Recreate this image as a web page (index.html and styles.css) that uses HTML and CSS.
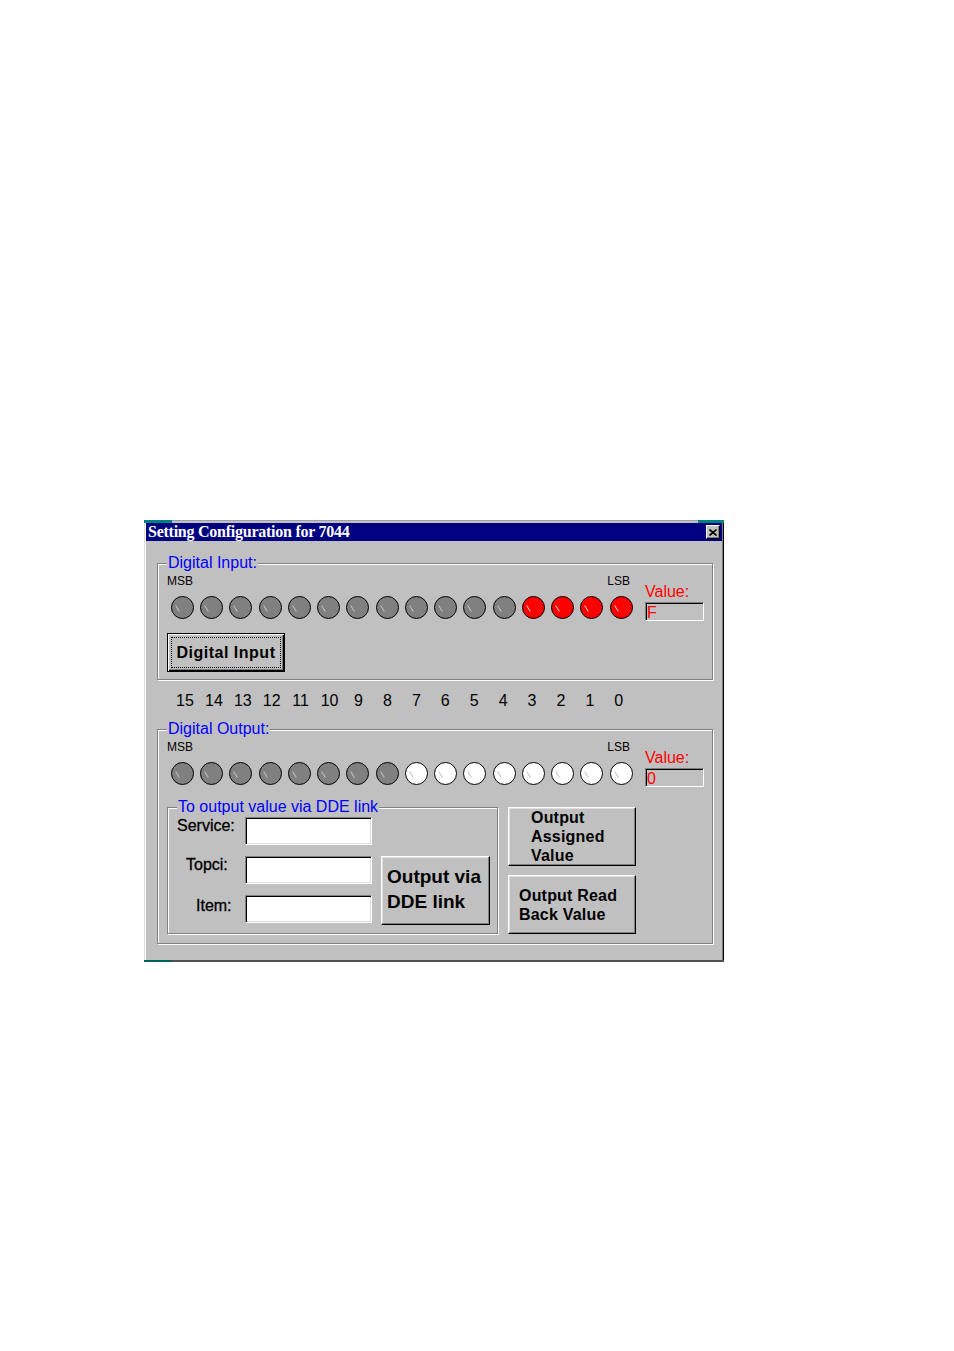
FILE: index.html
```html
<!DOCTYPE html>
<html>
<head>
<meta charset="utf-8">
<title>Setting Configuration for 7044</title>
<link rel="stylesheet" href="styles.css">
</head>
<body>
<div class="page">
  <div class="menu-cut"><span class="teal-l"></span><span class="frag"></span><span class="teal-r"></span></div>
  <div class="window">
    <div class="titlebar">
      <span class="title">Setting Configuration for 7044</span>
      <span class="close"><svg width="8" height="7" viewBox="0 0 8 7"><path d="M0.5 0.5 L7.5 6.5 M7.5 0.5 L0.5 6.5" stroke="#000" stroke-width="1.6" fill="none"/></svg></span>
    </div>
    <div class="client">
      <div class="group group-in">
        <span class="legend">Digital Input:</span>
        <div class="bits-row">
          <div class="ledcol">
            <div class="msb-lsb"><span>MSB</span><span>LSB</span></div>
            <div class="leds">
              <span class="led"></span><span class="led"></span><span class="led"></span><span class="led"></span>
              <span class="led"></span><span class="led"></span><span class="led"></span><span class="led"></span>
              <span class="led"></span><span class="led"></span><span class="led"></span><span class="led"></span>
              <span class="led red"></span><span class="led red"></span><span class="led red"></span><span class="led red"></span>
            </div>
          </div>
          <div class="valcol">
            <div class="val-label">Value:</div>
            <div class="val-box">F</div>
          </div>
        </div>
        <div class="btn btn-default"><span class="focus">Digital Input</span></div>
      </div>

      <div class="numbers">
        <span>15</span><span>14</span><span>13</span><span>12</span><span>11</span><span>10</span><span>9</span><span>8</span>
        <span>7</span><span>6</span><span>5</span><span>4</span><span>3</span><span>2</span><span>1</span><span>0</span>
      </div>

      <div class="group group-out">
        <span class="legend">Digital Output:</span>
        <div class="bits-row">
          <div class="ledcol">
            <div class="msb-lsb"><span>MSB</span><span>LSB</span></div>
            <div class="leds">
              <span class="led"></span><span class="led"></span><span class="led"></span><span class="led"></span>
              <span class="led"></span><span class="led"></span><span class="led"></span><span class="led"></span>
              <span class="led white"></span><span class="led white"></span><span class="led white"></span><span class="led white"></span>
              <span class="led white"></span><span class="led white"></span><span class="led white"></span><span class="led white"></span>
            </div>
          </div>
          <div class="valcol">
            <div class="val-label">Value:</div>
            <div class="val-box">0</div>
          </div>
        </div>
        <div class="dde-area">
          <div class="group subgroup">
            <span class="legend">To output value via DDE link</span>
            <div class="dde-grid">
              <span class="lbl lbl-service">Service:</span>
              <span class="input"></span>
              <span class="lbl lbl-topci">Topci:</span>
              <span class="input"></span>
              <span class="btn btn-dde">Output via<br>DDE link</span>
              <span class="lbl lbl-item">Item:</span>
              <span class="input"></span>
            </div>
          </div>
          <div class="side-btns">
            <div class="btn btn-side btn-assigned">Output<br>Assigned<br>Value</div>
            <div class="btn btn-side btn-read">Output Read<br>Back Value</div>
          </div>
        </div>
      </div>
    </div>
  </div>
  <div class="bottom-cut"><span class="teal-l"></span></div>
</div>
</body>
</html>
```

FILE: styles.css
```css
html, body {
  margin: 0;
  padding: 0;
  background: #ffffff;
}

.page {
  padding: 517px 0 0 144px;
  font-family: "Liberation Sans", Arial, sans-serif;
}

.menu-cut {
  width: 580px;
  height: 6px;
  display: flex;
  align-items: flex-end;
  background: #ffffff;
}
.menu-cut .teal-l {
  width: 28px;
  height: 3px;
  background: #008080;
}
.menu-cut .frag {
  flex: 1;
  height: 3px;
  background: #c0c0c0;
  border-top: 1px solid #a0a0a0;
  box-sizing: border-box;
}
.menu-cut .teal-r {
  width: 26px;
  height: 3px;
  background: #008080;
}

.window {
  width: 580px;
  box-sizing: border-box;
  background: #c0c0c0;
  border-left: 1px solid #dfdfdf;
  box-shadow: inset 1px 0 0 #ffffff, inset -1px 0 0 #808080;
  border-right: 1px solid #000000;
  padding: 0 1px;
}

.titlebar {
  height: 18px;
  background: #000080;
  display: flex;
  justify-content: space-between;
  align-items: flex-start;
  padding: 0 2px 0 2px;
}
.title {
  font-family: "Liberation Serif", "Times New Roman", serif;
  font-weight: bold;
  font-size: 16px;
  letter-spacing: -0.25px;
  line-height: 18px;
  color: #ffffff;
  white-space: nowrap;
}
.close {
  margin-top: 2px;
  width: 14px;
  height: 14px;
  box-sizing: border-box;
  background: #c0c0c0;
  border: 1px solid;
  border-color: #ffffff #000000 #000000 #ffffff;
  box-shadow: inset -1px -1px 0 #808080;
  display: flex;
  align-items: center;
  justify-content: center;
}
.close svg { display: block; }

.client {
  padding: 22px 0 16px 11px;
}

.group {
  position: relative;
  box-sizing: border-box;
  border: 1px solid #808080;
  box-shadow: inset 1px 1px 0 #ffffff, 1px 1px 0 #ffffff;
}
.legend {
  position: absolute;
  top: -10px;
  left: 9px;
  padding: 0 1px;
  background: #c0c0c0;
  color: #0000ff;
  font-size: 16px;
  line-height: 18px;
  white-space: nowrap;
}

.group-in {
  width: 556px;
  height: 117px;
  padding: 10px 0 0 9px;
}
.group-out {
  width: 556px;
  height: 215px;
  padding: 10px 0 0 9px;
}

.bits-row {
  display: flex;
}
.ledcol {
  width: 466px;
}
.msb-lsb {
  display: flex;
  justify-content: space-between;
  font-size: 12px;
  line-height: 14px;
  height: 14px;
  color: #000;
  padding-right: 3px;
}
.leds {
  margin-top: 8px;
  padding-left: 4px;
  display: flex;
  gap: 6.24px;
}
.led {
  position: relative;
  width: 23px;
  height: 23px;
  box-sizing: border-box;
  border-radius: 50%;
  border: 1px solid #000;
  background: #808080;
  flex: none;
}
.led::after {
  content: "";
  position: absolute;
  left: 5px;
  top: 8px;
  width: 1px;
  height: 7px;
  background: #c0c0c0;
  transform: rotate(-32deg);
}
.led.red { background: #ff0000; }
.led.red::after { background: #ffc8c8; }
.led.white { background: #ffffff; }
.led.white::after { background: #c0c0c0; }

.valcol {
  margin-left: 12px;
  padding-top: 9px;
}
.val-label {
  color: #ff0000;
  font-size: 16px;
  line-height: 18px;
}
.val-box {
  margin-top: 1px;
  width: 59px;
  height: 19px;
  box-sizing: border-box;
  border: 1px solid;
  border-color: #808080 #ffffff #ffffff #808080;
  box-shadow: inset 1px 1px 0 #000000;
  color: #ff0000;
  font-size: 16px;
  line-height: 17px;
  padding: 1px 0 0 1px;
}

.btn {
  box-sizing: border-box;
  background: #c0c0c0;
  color: #000;
  font-weight: bold;
  border: 1px solid;
  border-color: #ffffff #000000 #000000 #ffffff;
  box-shadow: inset -1px -1px 0 #808080, inset 1px 1px 0 #dfdfdf;
}

.btn-default {
  margin-top: 12px;
  width: 118px;
  height: 39px;
  border: 1px solid #000;
  box-shadow: inset 1px 1px 0 #ffffff, inset -1px -1px 0 #000000, inset -2px -2px 0 #808080;
  padding: 3px;
}
.btn-default .focus {
  display: flex;
  align-items: center;
  justify-content: center;
  width: 100%;
  height: 100%;
  box-sizing: border-box;
  border: 1px dotted #000;
  font-size: 16px;
  letter-spacing: 0.5px;
  line-height: 18px;
}

.numbers {
  margin: 12px 0 19px 13.5px;
  display: flex;
  font-size: 16px;
  line-height: 18px;
  color: #000;
}
.numbers span {
  width: 28.93px;
  text-align: center;
  flex: none;
}

.dde-area {
  margin-top: 20px;
  display: flex;
  align-items: flex-start;
}
.subgroup {
  width: 331px;
  height: 127px;
  padding: 9px 0 0 0;
}
.dde-grid {
  display: grid;
  grid-template-columns: 77px 127px 9px 109px;
  grid-template-rows: 28px 28px 28px;
  row-gap: 11px;
}
.lbl {
  grid-column: 1;
  font-size: 16px;
  line-height: 18px;
  color: #000;
  -webkit-text-stroke: 0.3px #000;
  white-space: nowrap;
}
.lbl-service { padding-left: 9px; }
.lbl-topci { padding-left: 18px; }
.lbl-item { padding-left: 28px; padding-top: 2px; }

.input {
  grid-column: 2;
  box-sizing: border-box;
  height: 28px;
  background: #ffffff;
  border: 1px solid;
  border-color: #808080 #ffffff #ffffff #808080;
  box-shadow: inset 1px 1px 0 #000000, inset -1px -1px 0 #dfdfdf;
}

.btn-dde {
  grid-column: 4;
  grid-row: 2 / span 2;
  height: 69px;
  font-size: 19px;
  line-height: 25px;
  padding: 7px 0 0 5px;
  white-space: nowrap;
}

.side-btns {
  margin-left: 10px;
  display: flex;
  flex-direction: column;
  gap: 9px;
}
.btn-side {
  width: 128px;
  height: 59px;
  font-size: 16px;
  line-height: 19px;
  letter-spacing: 0.2px;
  white-space: nowrap;
}
.btn-assigned {
  padding: 0 0 0 22px;
}
.btn-read {
  padding: 10px 0 0 10px;
}

.bottom-cut {
  width: 580px;
  height: 2px;
  background: #505050;
  display: flex;
}
.bottom-cut .teal-l {
  width: 28px;
  height: 2px;
  background: #006060;
}
```
